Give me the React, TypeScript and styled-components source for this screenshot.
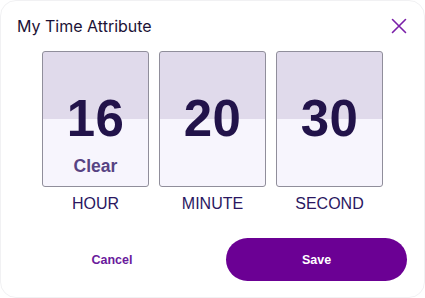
import React, { useState } from 'react';
import styled, { createGlobalStyle } from 'styled-components';

const GlobalStyle = createGlobalStyle`
    html, body {
        margin: 0;
        padding: 0;
        background: #ffffff;
    }
    * {
        box-sizing: border-box;
    }
`;

const Dialog = styled.div`
    width: 425px;
    height: 298px;
    background: #ffffff;
    border: 1px solid #f1f1f3;
    border-radius: 16px;
    display: flex;
    flex-direction: column;
    font-family: "Liberation Sans", Arial, sans-serif;
    overflow: hidden;
`;

const Header = styled.div`
    height: 49px;
    padding: 0 16px 0 16px;
    display: flex;
    align-items: center;
    justify-content: space-between;
`;

const Title = styled.h2`
    margin: 0;
    font-family: Inter, "Liberation Sans", sans-serif;
    font-size: 16px;
    font-weight: 400;
    color: #1c1236;
`;

const CloseButton = styled.button`
    border: none;
    background: none;
    padding: 0;
    width: 18px;
    height: 18px;
    display: flex;
    align-items: center;
    justify-content: center;
    cursor: pointer;
`;

const Cards = styled.div`
    display: flex;
    justify-content: center;
    gap: 10px;
    padding-top: 1px;
`;

const Column = styled.div`
    display: flex;
    flex-direction: column;
    align-items: center;
`;

const Card = styled.div`
    width: 107px;
    height: 136px;
    border: 1px solid #908e9b;
    border-radius: 3px;
    background: linear-gradient(to bottom, #e0daeb 0, #e0daeb 67px, #f7f5fd 67px, #f7f5fd 100%);
    display: flex;
    flex-direction: column;
    align-items: center;
    padding-top: 42px;
`;

const Digits = styled.div`
    font-size: 51px;
    line-height: 50px;
    font-weight: 700;
    color: #22134a;
    letter-spacing: 0.5px;
`;

const ClearLink = styled.button`
    margin-top: 12px;
    border: none;
    background: none;
    padding: 0;
    font-family: "Liberation Sans", Arial, sans-serif;
    font-size: 17.5px;
    line-height: 20px;
    font-weight: 700;
    color: #574383;
    cursor: pointer;
`;

const Label = styled.div`
    margin-top: 8px;
    font-size: 16px;
    line-height: 18px;
    color: #2a1761;
`;

const Footer = styled.div`
    margin-top: 25px;
    padding: 0 17px 0 16px;
    display: grid;
    grid-template-columns: 1fr 181px;
    gap: 19px;
`;

const FooterButton = styled.button<{ $primary?: boolean }>`
    height: 43px;
    border: none;
    border-radius: 22px;
    background: ${(p) => (p.$primary ? '#6b0094' : 'transparent')};
    color: ${(p) => (p.$primary ? '#ffffff' : '#6a1a9c')};
    font-family: "Liberation Sans", Arial, sans-serif;
    font-size: 12.5px;
    font-weight: 700;
    cursor: pointer;
`;

const CloseIcon: React.FC = () => (
    <svg width="16" height="16" viewBox="0 0 16 16" fill="none">
        <path d="M1.5 1.5 L14.5 14.5 M14.5 1.5 L1.5 14.5" stroke="#7a1fa8" strokeWidth="1.6" strokeLinecap="round" />
    </svg>
);

const App: React.FC = () => {
    const [time] = useState({ hour: '16', minute: '20', second: '30' });

    const parts = [
        { key: 'hour', label: 'HOUR', value: time.hour, clear: true },
        { key: 'minute', label: 'MINUTE', value: time.minute, clear: false },
        { key: 'second', label: 'SECOND', value: time.second, clear: false },
    ];

    return (
        <>
            <GlobalStyle />
            <Dialog>
                <Header>
                    <Title>My Time Attribute</Title>
                    <CloseButton aria-label="Close">
                        <CloseIcon />
                    </CloseButton>
                </Header>
                <Cards>
                    {parts.map((p) => (
                        <Column key={p.key}>
                            <Card>
                                <Digits>{p.value}</Digits>
                                {p.clear && <ClearLink>Clear</ClearLink>}
                            </Card>
                            <Label>{p.label}</Label>
                        </Column>
                    ))}
                </Cards>
                <Footer>
                    <FooterButton>Cancel</FooterButton>
                    <FooterButton $primary>Save</FooterButton>
                </Footer>
            </Dialog>
        </>
    );
};

export default App;
